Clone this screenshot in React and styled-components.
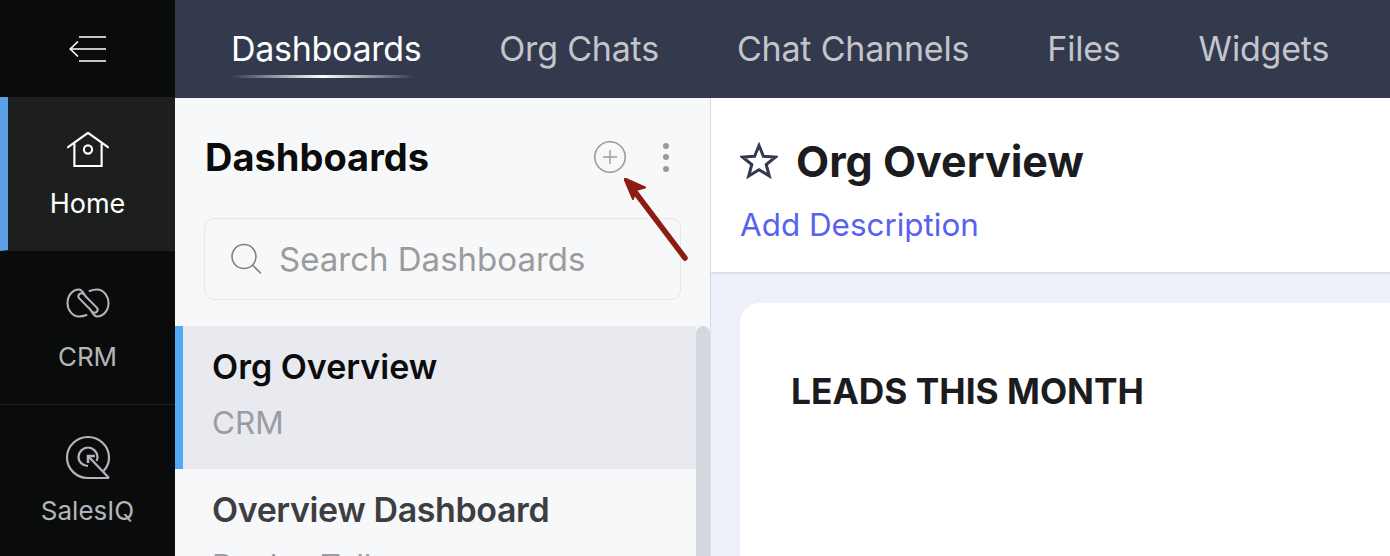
import React from "react";
import styled, { createGlobalStyle } from "styled-components";

const Global = createGlobalStyle`
  html, body {
    margin: 0;
    height: 100%;
    overflow: hidden;
  }
  body {
    font-family: Inter, "Noto Sans", sans-serif;
  }
  * {
    box-sizing: border-box;
  }
`;

const tabs = ["Dashboards", "Org Chats", "Chat Channels", "Files", "Widgets"];

function App() {
  return (
    <Page>
      <Global />
      <Rail>
        <MenuToggle>
          <svg width="40" height="28" viewBox="0 0 40 28" fill="none" stroke="#fff" strokeWidth="1.6">
            <path d="M11 2h27M2 14h36M11 26h27" />
            <path d="M10 6.5 2.2 14l7.8 7.5" />
          </svg>
        </MenuToggle>
        <RailItem $active $top={34} $gap={20}>
          <svg width="44" height="37" viewBox="0 0 44 38" fill="none" stroke="#fff" strokeWidth="2.2">
            <path d="M1.5 16.5 22 2l20.5 14.5" strokeLinecap="round" strokeLinejoin="round" />
            <path d="M8 12.5V36h28V12.5" />
            <circle cx="22" cy="19" r="4.2" />
          </svg>
          <RailLabel $active>Home</RailLabel>
        </RailItem>
        <RailItem $top={37} $gap={23}>
          <svg width="44" height="30" viewBox="0 0 44 30" fill="none" stroke="#b4b5bc" strokeWidth="2" strokeLinecap="round">
            <path d="M20.5 27C18 28 15.5 28.5 13 28.5 6 28.5 1.5 21.5 1.5 15 1.5 7 7 1.5 13 1.5 16.5 1.5 18 6.8 20 8.8L31 19.8A3 3 0 0 1 26.8 24" />
            <path d="M23.5 3C26 2 28.5 1.5 31 1.5 38 1.5 42.5 8.5 42.5 15 42.5 23 37 28.5 31 28.5 27.5 28.5 26 23.2 24 21.2L13 10.2A3 3 0 0 1 17.2 6" />
          </svg>
          <RailLabel>CRM</RailLabel>
        </RailItem>
        <RailItem $top={30} $gap={14}>
          <svg width="46" height="46" viewBox="0 0 46 46" fill="none" stroke="#b4b5bc" strokeWidth="2.2">
            <path d="M44 43H23C11 43 2 33.5 2 22.5 2 11 11.5 2 23 2s21 9 21 20.5c0 5.5-2 10-5.5 13.5" />
            <path d="M23 31c-5 0-9.5-4-9.5-9s4.500-9.500 9.500-9.500 9.500 4.500 9.500 9.500c0 1.500-.3 2.800-1 4" />
            <path d="M44 43 23.5 21.5" />
            <path d="M23 28v-7h7" strokeWidth="2.6" />
          </svg>
          <RailLabel>SalesIQ</RailLabel>
        </RailItem>
      </Rail>
      <Content>
        <TopBar>
          {tabs.map((tab, i) => (
            <Tab key={tab} $active={i === 0}>
              {tab}
            </Tab>
          ))}
        </TopBar>
        <Columns>
          <ListPanel>
            <PanelHeader>
              <PanelTitle>Dashboards</PanelTitle>
              <PanelActions>
                <svg width="34" height="34" viewBox="0 0 34 34" fill="none" stroke="#9a9a9a">
                  <circle cx="17" cy="17" r="15.2" strokeWidth="1.6" />
                  <path d="M17 10v14M10 17h14" strokeWidth="1.4" />
                </svg>
                <MoreDots>
                  <i />
                  <i />
                  <i />
                </MoreDots>
              </PanelActions>
            </PanelHeader>
            <SearchBox>
              <svg width="34" height="34" viewBox="0 0 34 34" fill="none" stroke="#808080" strokeWidth="1.6">
                <circle cx="15" cy="14.5" r="12" />
                <path d="m23.5 23 8.5 8.5" />
              </svg>
              <SearchText>Search Dashboards</SearchText>
            </SearchBox>
            <ListArea>
              <Scrollbar />
              <ListItem $active>
                <ItemName $active>Org Overview</ItemName>
                <ItemSub>CRM</ItemSub>
              </ListItem>
              <ListItem>
                <ItemName>Overview Dashboard</ItemName>
                <ItemSub>Desk – Tally</ItemSub>
              </ListItem>
            </ListArea>
          </ListPanel>
          <Main>
            <MainHeader>
              <TitleRow>
                <svg width="38" height="38" viewBox="0 0 38 38" fill="none" stroke="#333a4d" strokeWidth="3" strokeLinejoin="miter">
                  <path d="M19 3.5 23.4 14.2 35.5 15 26.2 22.5 29.3 34 19 27.8 8.7 34 11.8 22.5 2.5 15 14.6 14.2Z" />
                </svg>
                <MainTitle>Org Overview</MainTitle>
              </TitleRow>
              <AddDescription>Add Description</AddDescription>
            </MainHeader>
            <Canvas>
              <Card>
                <CardTitle>LEADS THIS MONTH</CardTitle>
              </Card>
            </Canvas>
          </Main>
        </Columns>
      </Content>
      <Arrow width="70" height="90" viewBox="0 0 70 90" fill="none">
        <path d="M61 80 8 10" stroke="#8c1d12" strokeWidth="5.5" strokeLinecap="round" />
        <path d="M0 0 21 9.5 12 12 9 21Z" fill="#8c1d12" stroke="#8c1d12" strokeWidth="2" strokeLinejoin="round" />
      </Arrow>
    </Page>
  );
}

const Page = styled.div`
  position: relative;
  display: flex;
  width: 1390px;
  height: 556px;
  overflow: hidden;
  background: #fff;
`;

const Rail = styled.aside`
  flex: 0 0 175px;
  display: flex;
  flex-direction: column;
  background: #0a0c0c;
`;

const MenuToggle = styled.div`
  flex: 0 0 97px;
  display: flex;
  align-items: center;
  justify-content: center;
`;

const RailItem = styled.div`
  flex: 0 0 154px;
  display: flex;
  flex-direction: column;
  align-items: center;
  gap: ${(p) => p.$gap}px;
  padding-top: ${(p) => p.$top}px;
  padding-right: ${(p) => (p.$active ? "8px" : "0")};
  border-bottom: 1px solid #1f2121;
  border-left: ${(p) => (p.$active ? "8px solid #5ca1e6" : "0")};
  background: ${(p) => (p.$active ? "#1d1f1f" : "transparent")};
`;

const RailLabel = styled.div`
  font-size: ${(p) => (p.$active ? "27px" : "26px")};
  line-height: 32px;
  color: ${(p) => (p.$active ? "#fff" : "#b4b5bc")};
`;

const Content = styled.div`
  flex: 1;
  min-width: 0;
  display: flex;
  flex-direction: column;
`;

const TopBar = styled.nav`
  flex: 0 0 98px;
  display: flex;
  align-items: center;
  gap: 78px;
  padding: 0 0 2px 56px;
  background: #333a4d;
  white-space: nowrap;
`;

const Tab = styled.div`
  position: relative;
  font-size: 34px;
  letter-spacing: ${(p) => (p.$active ? "-0.3px" : "-0.2px")};
  color: ${(p) => (p.$active ? "#fff" : "#c3c5cb")};

  &::after {
    content: "";
    display: ${(p) => (p.$active ? "block" : "none")};
    position: absolute;
    left: 0;
    right: 6px;
    bottom: -9px;
    height: 3px;
    background: linear-gradient(90deg, rgba(255, 255, 255, 0), #fff 50%, rgba(255, 255, 255, 0));
  }
`;

const Columns = styled.div`
  flex: 1;
  min-height: 0;
  display: flex;
`;

const ListPanel = styled.section`
  flex: 0 0 536px;
  display: flex;
  flex-direction: column;
  background: #f7f8fa;
  border-right: 1px solid #d9dce3;
`;

const PanelHeader = styled.div`
  flex: 0 0 120px;
  display: flex;
  align-items: center;
  justify-content: space-between;
  padding: 0 41px 2px 30px;
`;

const PanelTitle = styled.h2`
  margin: 0;
  font-size: 38px;
  font-weight: 700;
  color: #0c0c0c;
`;

const PanelActions = styled.div`
  display: flex;
  align-items: center;
  gap: 36px;
`;

const MoreDots = styled.div`
  display: flex;
  flex-direction: column;
  gap: 5.5px;

  i {
    display: block;
    width: 6px;
    height: 6px;
    border-radius: 50%;
    background: #9a9a9a;
  }
`;

const SearchBox = styled.div`
  flex: 0 0 82px;
  display: flex;
  align-items: center;
  gap: 16px;
  margin: 0 29px;
  padding-left: 24px;
  border: 1.5px solid #e6e7ea;
  border-radius: 10px;
`;

const SearchText = styled.span`
  font-size: 33px;
  color: #9b9b9b;
  white-space: nowrap;
`;

const ListArea = styled.div`
  position: relative;
  flex: 1;
  min-height: 0;
  margin-top: 26px;
  overflow: hidden;
`;

const Scrollbar = styled.div`
  position: absolute;
  top: 0;
  right: 0;
  bottom: -20px;
  width: 14px;
  border-radius: 7px;
  background: #d5d7de;
`;

const ListItem = styled.div`
  height: 143px;
  margin-right: 14px;
  padding: 21px 0 0 ${(p) => (p.$active ? "29px" : "37px")};
  border-left: ${(p) => (p.$active ? "8px solid #52a8f5" : "0")};
  background: ${(p) => (p.$active ? "#e8eaef" : "transparent")};
`;

const ItemName = styled.div`
  font-size: 34px;
  line-height: 40px;
  font-weight: 600;
  letter-spacing: ${(p) => (p.$active ? "0" : "-0.4px")};
  color: ${(p) => (p.$active ? "#0c0c0c" : "#3d3e42")};
`;

const ItemSub = styled.div`
  margin-top: 18px;
  font-size: 31.5px;
  line-height: 36px;
  color: #9b9ca3;
`;

const Main = styled.main`
  flex: 1;
  min-width: 0;
  display: flex;
  flex-direction: column;
`;

const MainHeader = styled.header`
  flex: 0 0 176px;
  padding: 40px 0 0 29px;
  background: #fff;
  border-bottom: 2px solid #dcdfe6;
`;

const TitleRow = styled.div`
  display: flex;
  align-items: center;
  gap: 18px;
`;

const MainTitle = styled.h1`
  margin: 0;
  font-size: 43px;
  line-height: 46px;
  font-weight: 700;
  color: #1c1c1e;
`;

const AddDescription = styled.div`
  margin-top: 22px;
  font-size: 31.4px;
  line-height: 38px;
  color: #5661f0;
`;

const Canvas = styled.div`
  flex: 1;
  min-height: 0;
  padding: 29px 0 0 29px;
  background: #edf0f8;
`;

const Card = styled.div`
  height: 400px;
  padding: 67px 0 0 51px;
  border-radius: 20px 0 0 0;
  background: #fff;
`;

const CardTitle = styled.h3`
  margin: 0;
  font-size: 35.3px;
  line-height: 44px;
  font-weight: 700;
  color: #1c1c1e;
`;

const Arrow = styled.svg`
  position: absolute;
  left: 624px;
  top: 178px;
`;

export default App;
